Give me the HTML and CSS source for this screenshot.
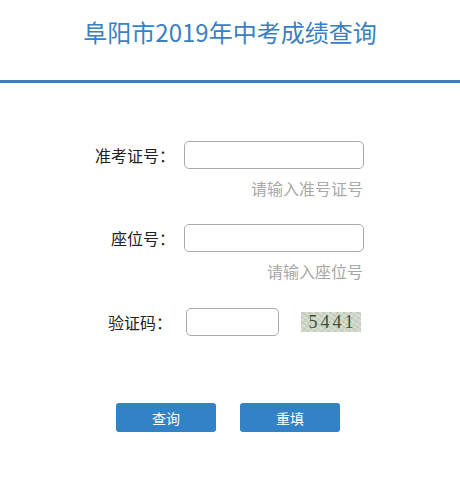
FILE: index.html
```html
<!DOCTYPE html>
<html lang="zh-cn">
<head>
  <meta charset="UTF-8">
  <title>阜阳市2019年中考成绩查询</title>
  <link rel="stylesheet" href="styles.css">
</head>
<body>

  <div class="header">
    <h2>阜阳市2019年中考成绩查询</h2>
  </div>

  <form class="query-form" onsubmit="return false">
    <div class="row">
      <label for="zkzh">准考证号：</label>
      <input type="text" id="zkzh" class="txt">
    </div>
    <div class="hint">请输入准号证号</div>

    <div class="row row-seat">
      <label for="zwh">座位号：</label>
      <input type="text" id="zwh" class="txt">
    </div>
    <div class="hint">请输入座位号</div>

    <div class="row row-code">
      <label for="yzm">验证码：</label>
      <input type="text" id="yzm" class="txt short">
      <span class="captcha">5441</span>
    </div>

    <div class="buttons">
      <button type="submit">查询</button>
      <button type="reset">重填</button>
    </div>
  </form>

</body>
</html>
```

FILE: styles.css
```css
body {
  margin: 0;
  background: #fff;
  color: #222;
  font-family: "Noto Sans CJK SC", "DejaVu Sans", sans-serif;
}
.header {
  height: 80px;
  border-bottom: 3px solid #3a80c0;
  text-align: center;
}
.header h2 {
  margin: 0;
  padding-top: 15px;
  font-size: 24px;
  font-weight: normal;
  color: #3a7fc1;
  line-height: 34px;
}
.query-form {
  padding-top: 58px;
}
.row {
  display: flex;
  align-items: center;
  height: 28px;
}
.row label {
  width: 175px;
  text-align: right;
  font-size: 16px;
  color: #222;
}
.txt {
  box-sizing: border-box;
  margin-left: 9px;
  width: 180px;
  height: 28px;
  border: 1px solid #aaa;
  border-radius: 5px;
  padding: 0 6px;
}
.hint {
  width: 363px;
  text-align: right;
  font-size: 16px;
  color: #a8a8a8;
  margin-top: 8px;
  line-height: 22px;
}
.row-seat {
  margin-top: 25px;
}
.row-code {
  margin-top: 26px;
}
.row-code label {
  width: 172px;
}
.txt.short {
  margin-left: 14px;
  width: 93px;
}
.captcha {
  margin-left: 22px;
  width: 60px;
  height: 20px;
  line-height: 20px;
  text-align: center;
  font-family: "Liberation Serif", serif;
  font-size: 18px;
  letter-spacing: 3px;
  text-indent: 3px;
  color: #3f4f3a;
  background:
    repeating-linear-gradient(35deg, rgba(150, 170, 150, 0.35) 0 1px, transparent 1px 4px),
    repeating-linear-gradient(-50deg, rgba(170, 180, 160, 0.3) 0 1px, transparent 1px 5px),
    #d6ddd0;
}
.buttons {
  display: flex;
  gap: 24px;
  margin-top: 67px;
  padding-left: 116px;
}
button {
  width: 100px;
  height: 29px;
  border: none;
  border-radius: 3px;
  background: #3182c6;
  color: #fff;
  font-family: "Noto Sans CJK SC", sans-serif;
  font-size: 14px;
  cursor: pointer;
}
```
